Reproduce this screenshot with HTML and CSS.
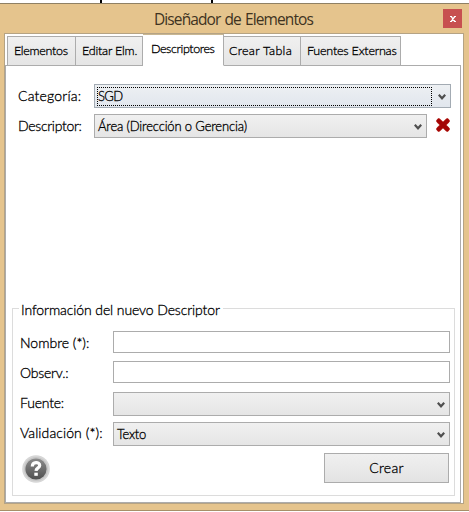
FILE: index.html
```html
<!DOCTYPE html>
<html lang="es">
<head>
<meta charset="utf-8">
<title>Diseñador de Elementos</title>
<link rel="stylesheet" href="styles.css">
</head>
<body>
<div class="backdrop"></div>
<div class="window">
  <header class="titlebar">
    <h1>Diseñador de Elementos</h1>
    <button class="close" aria-label="Cerrar"><svg width="6" height="6" viewBox="0 0 7 7"><path d="M0 .5H2.5M4.5 .5H7M0 6.5H2.5M4.5 6.5H7M1.3 .5L5.7 6.5M5.7 .5L1.3 6.5" stroke="#fff" stroke-width="1.6"/></svg></button>
  </header>
  <main class="client">
    <nav class="tabs">
      <span class="tab t-elementos">Elementos</span>
      <span class="tab t-editar">Editar Elm.</span>
      <span class="tab active">Descriptores</span>
      <span class="tab t-crear">Crear Tabla</span>
      <span class="tab t-fuentes">Fuentes Externas</span>
    </nav>
    <section class="page">
      <div class="row top-row">
        <span class="label l-cat">Categoría:</span>
        <div class="select focused"><span class="value v-sgd">SGD</span><svg class="chev" viewBox="0 0 8 6"><path d="M.8 .8L4 4.3L7.2 .8" /></svg></div>
      </div>
      <div class="row top-row second">
        <span class="label l-desc">Descriptor:</span>
        <div class="select"><span class="value v-area">Área (Dirección o Gerencia)</span><svg class="chev" viewBox="0 0 8 6"><path d="M.8 .8L4 4.3L7.2 .8" /></svg></div>
        <svg class="delete" viewBox="0 0 16 16"><path d="M3.8 4L12.2 12M12.2 4L3.8 12" stroke="#c0352c" stroke-width="5" stroke-linecap="round"/><path d="M3.8 4L12.2 12M12.2 4L3.8 12" stroke="#a30505" stroke-width="3.8" stroke-linecap="square"/></svg>
      </div>
      <fieldset class="group">
        <legend><span class="caption">Información del nuevo Descriptor</span></legend>
        <div class="row"><span class="label l-nom">Nombre (*):</span><div class="input"></div></div>
        <div class="row"><span class="label l-obs">Observ.:</span><div class="input"></div></div>
        <div class="row r-select"><span class="label l-fue">Fuente:</span><div class="select"><svg class="chev" viewBox="0 0 8 6"><path d="M.8 .8L4 4.3L7.2 .8" /></svg></div></div>
        <div class="row r-select"><span class="label l-val">Validación (*):</span><div class="select"><span class="value v-texto">Texto</span><svg class="chev" viewBox="0 0 8 6"><path d="M.8 .8L4 4.3L7.2 .8" /></svg></div></div>
        <div class="actions">
          <svg class="help" viewBox="0 0 28 28">
            <defs><linearGradient id="g" x1="0" y1="0" x2="0" y2="1"><stop offset="0" stop-color="#8c8c8c"/><stop offset="1" stop-color="#505050"/></linearGradient></defs>
            <circle cx="14" cy="14" r="13.8" fill="#d6d6d6"/><circle cx="14" cy="14" r="12" fill="#c6c6c6"/><circle cx="14" cy="14" r="10.6" fill="url(#g)"/>
            <path d="M10.3 11.4C10.3 6.2 17.8 6.6 17.7 10.5C17.6 13 14.1 12.8 14 15.9" fill="none" stroke="#fff" stroke-width="3.2"/><path d="M12.3 17.7H15.8V20.8H12.3Z" fill="#fff"/>
          </svg>
          <button class="create">Crear</button>
        </div>
      </fieldset>
    </section>
  </main>
</div>
</body>
</html>
```

FILE: styles.css
```css
* { box-sizing: border-box; }
body { margin: 0; width: 469px; height: 512px; overflow: hidden; background: #fff; font: 300 13px/16px Lato, "Liberation Sans", sans-serif; color: #000; -webkit-text-stroke: .3px; }
button { font: inherit; color: inherit; padding: 0; }
.backdrop { height: 3px; background: linear-gradient(#000, #000) 100px 0 / 2px 3px no-repeat, linear-gradient(#000, #000) 211px 0 / 2px 3px no-repeat, #fff; }
.window { height: 508px; background: #e5c48d; border-top: 1px solid #8f8064; border-bottom: 1px solid #a78f68; display: flex; flex-direction: column; }
.titlebar { height: 29px; display: grid; grid-template-columns: 1fr 19px; padding-right: 7px; flex: none; }
h1 { margin: 0 0 0 154px; font: 15.5px/30px "Open Sans", sans-serif; letter-spacing: -.9px; word-spacing: 1px; white-space: nowrap; color: #40331f; -webkit-text-stroke: 0; }
.close { width: 19px; height: 19px; margin-top: 5px; border: 0; background: #c75050; display: grid; place-items: center; }
.client { height: 471px; margin: 0 5px 0 4px; border: 1px solid #b5a384; background: #fff; padding: 0 2px 1px 0; }
.tabs { height: 31px; display: flex; align-items: flex-end; padding-left: 2px; font-size: 12.5px; }
.tab { height: 30px; line-height: 28px; border: 1px solid #acacac; background: linear-gradient(#f0f0f0, #e5e5e5); padding-left: 6px; white-space: nowrap; margin-bottom: -1px; }
.tab + .tab { border-left: 0; }
.t-elementos { width: 69px; letter-spacing: -.3px; }
.t-editar { width: 67px; letter-spacing: -.2px; }
.active { width: 81px; height: 32px; background: #fff; border-top-color: #c8b692; border-bottom-color: #fff; padding-left: 8px; z-index: 1; letter-spacing: -.4px; }
.t-crear { width: 77px; letter-spacing: .3px; padding-left: 5px; }
.t-fuentes { width: 100px; letter-spacing: -.2px; }
.page { height: 438px; border: 1px solid #acacac; padding-top: 18px; display: flex; flex-direction: column; }
.row { display: flex; }
.top-row { padding-left: 12px; height: 24px; }
.top-row .label { width: 76px; }
.second { margin-top: 6px; }
.second .select { width: 333px; }
.top-row .focused { width: 357px; }
.label { font-size: 14px; line-height: 24px; white-space: nowrap; flex: none; }
.l-cat { letter-spacing: .2px; }
.l-desc { letter-spacing: -.3px; }
.l-val { letter-spacing: .1px; }
.l-fue, .l-obs { letter-spacing: -.2px; }
.select { height: 24px; border: 1px solid #acacac; background: linear-gradient(#f0f0f0, #e5e5e5); display: flex; align-items: center; flex: none; }
.value { padding-left: 3px; white-space: nowrap; }
.v-area { letter-spacing: -.15px; }
.v-texto { letter-spacing: -.3px; }
.focused { border-color: #a3abb3; background: linear-gradient(#edf0f3, #e1e6ed); }
.focused .value { width: 335px; height: 19px; margin: 1px 0 0 2px; border: 1px dotted #000; padding: 0; line-height: 17px; letter-spacing: -.6px; }
.chev { width: 8px; height: 6px; margin: 2px 4px 0 auto; fill: none; stroke: #4f4f4f; stroke-width: 2.2; }
.delete { width: 16px; height: 16px; margin: 3px 0 0 8px; fill: none; }
.group { width: 443px; height: 196px; margin: 162px 0 0 6px; padding: 0; border: 1px solid #dcdcdc; min-width: 0; }
legend { margin-left: 6px; padding: 0 3px 0 2px; height: 16px; font-size: 14px; letter-spacing: -.1px; white-space: nowrap; }
.caption { display: block; padding-top: 2px; }
.group .row { padding-left: 7px; height: 30px; }
.group .row:nth-of-type(1) { margin-top: 15px; }
.group .label { width: 93px; }
.input { width: 337px; height: 22px; border: 1px solid #acacac; background: #fff; }
.group .select { width: 337px; margin-top: 1px; }
.actions { display: flex; justify-content: space-between; padding: 2px 5px 0 9px; }
.help { width: 28px; height: 28px; margin-top: 2px; }
.create { width: 125px; height: 30px; border: 1px solid #acacac; background: linear-gradient(#f0f0f0, #e3e3e3); font-size: 14px; letter-spacing: .3px; }
```
